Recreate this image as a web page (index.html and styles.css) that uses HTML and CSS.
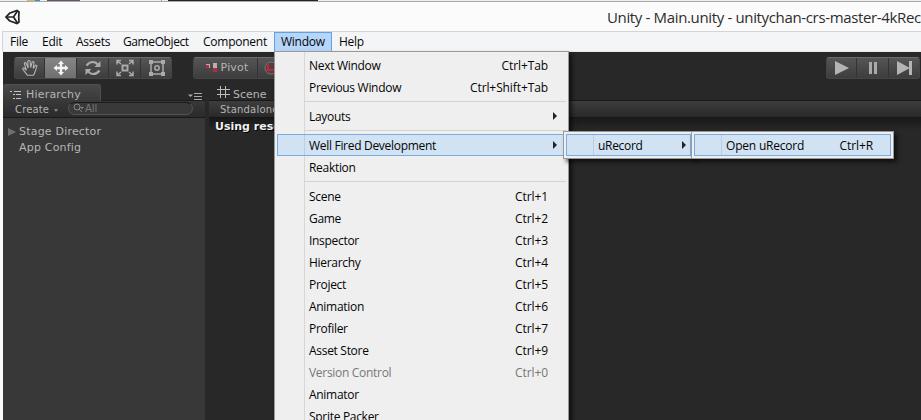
FILE: index.html
```
<!DOCTYPE html>
<html lang="en">
<head>
<meta charset="utf-8">
<title>Unity - Main.unity</title>
<link rel="stylesheet" href="styles.css">
</head>
<body>
<div class="window">
  <div class="behind"><i class="tab-edge"></i><i class="tab-gold"></i><i class="tab-blue"></i><i class="tab-text"></i><i class="tab-end"></i><i class="tab-dark"></i></div>
  <header class="titlebar">
    <svg class="logo" width="16" height="16" viewBox="0 0 16 16" fill="none" stroke="#222" stroke-width="1.7"><path d="M1 8 4.5 4.3 12 1.5 14 3 13.7 8 14 13 12 14.5 4.5 11.7Z"/><path d="M1.5 8H8.5L12.5 2M8.5 8 12.5 14"/></svg>
    <span class="caption">Unity - Main.unity - unitychan-crs-master-4kReco</span>
  </header>
  <nav class="menubar">
    <span class="m-file">File</span><span class="m-edit">Edit</span><span class="m-assets">Assets</span><span class="m-object">GameObject</span><span class="m-component">Component</span><span class="m-window">Window</span><span class="m-help">Help</span>
  </nav>
  <main class="editor">
    <div class="toolbar">
      <div class="group tools">
        <span class="tool"><svg width="18" height="18" viewBox="0 0 20 20" fill="none" stroke="#b5b5b5" stroke-width="1.2"><path d="M7 18 2 11.500Q1.500 9.500 3.500 10L6 12.500 3.700 5Q4.500 3 6 5L8 10 7.500 2.500Q9 .8 10.200 2.500L10.700 9.500 12.500 3.200Q14 2 14.500 4L13.500 10.500 16.200 7Q18 6.500 17.500 8.500L15.500 14.500 14 18Z"/></svg></span>
        <span class="tool on"><svg width="18" height="18" viewBox="0 0 18 18" fill="#f4f4f4"><path d="M9 1.5 12 5H10.2V7.8H13V6L16.5 9 13 12V10.2H10.2V13H12L9 16.5 6 13H7.8V10.2H5V12L1.5 9 5 6V7.8H7.8V5H6Z"/></svg></span>
        <span class="tool"><svg width="18" height="18" viewBox="0 0 18 18" fill="none" stroke="#aaa" stroke-width="2.2"><path d="M2.500 6.500Q5 3 9 3 12 3 14 6M15.500 11.500Q13 15 9 15 6 15 4 12"/><path d="M16.500 2V8H10.500ZM1.500 16V10H7.500Z" fill="#aaa" stroke="none"/></svg></span>
        <span class="tool"><svg width="18" height="18" viewBox="0 0 18 18" fill="none" stroke="#aaa" stroke-width="1.5"><path d="M6.5 6.500h5v5h-5z" stroke-width="2"/><path d="M5 5 1 1.500M1 5.500V1.500H5M13 5 17 1.500M13 1.500h4v4M5 13 1 16.500M1 12.500v4h4M13 13l4 3.500M13 16.500h4v-4"/></svg></span>
        <span class="tool"><svg width="18" height="18" viewBox="0 0 18 18" fill="none" stroke="#aaa" stroke-width="1.5"><path d="M3 3h12v12H3z"/><path d="M1 1h4v4H1zM13 1h4v4h-4zM1 13h4v4H1zM13 13h4v4h-4z" fill="#aaa" stroke="none"/><circle cx="9" cy="9" r="2.2"/></svg></span>
      </div>
      <div class="group pivots">
        <span class="pivot"><svg width="12" height="10" viewBox="0 0 12 10"><path d="M0 1h4v4H0zM7 0h4v9H7z" fill="#b8b0b0"/><path d="M0 2h3v3H0zM7 5h4v4H7z" fill="#b72c3b"/></svg><b class="pivot-text">Pivot</b></span>
        <span class="globe"><svg width="14" height="14" viewBox="0 0 14 14" fill="#593c3f" stroke="#777"><circle cx="7" cy="7" r="6"/><path d="M4 3v6h6" fill="none" stroke="#b72c3b" stroke-width="2"/></svg></span>
      </div>
      <div class="group plays">
        <span><svg width="16" height="14" viewBox="0 0 16 14" fill="#b4b4b4"><path d="M1 0 15 7 1 14Z"/></svg></span>
        <span><svg width="12" height="14" viewBox="0 0 12 14" fill="#aaa"><path d="M2 1h3v12H2zM7 1h3v12H7z"/></svg></span>
        <span><svg width="16" height="14" viewBox="0 0 16 14" fill="#b4b4b4"><path d="M0 0 12 6.500V0H15V14H12V7.500L0 14Z"/></svg></span>
      </div>
    </div>
    <div class="panels">
      <section class="hierarchy">
        <div class="tabs">
          <div class="tab"><svg width="12" height="10" viewBox="0 0 12 10" stroke="#c4c4c4" fill="none"><path d="M0 1.500h2M4 1.500h7M3 4.500h2M6 4.500h5M3 8.500h2M6 8.500h5"/></svg><b class="tab-label">Hierarchy</b></div>
          <svg class="panel-menu" width="15" height="8" viewBox="0 0 15 8"><path d="M0 1.500h5L2.500 4Z" fill="#aaa"/><path d="M6 .5h8M6 3.500h8M6 6.500h8" stroke="#aaa"/></svg>
        </div>
        <div class="bar"><span class="create">Create</span><i class="down"></i><div class="search"><svg width="12" height="11" viewBox="0 0 12 11" fill="none" stroke="#858585"><circle cx="4" cy="4" r="3"/><path d="M6 6l3 3"/><path d="M7 4h4L9 6Z" fill="#858585" stroke="none"/></svg><span class="all">All</span></div></div>
        <div class="tree"><div class="row"><i class="right"></i><span class="stage">Stage Director</span></div><div class="row app"><span class="config">App Config</span></div></div>
      </section>
      <section class="scene">
        <div class="scene-tab"><svg width="13" height="12" viewBox="0 0 13 12" stroke="#bbb"><path d="M3.500 0v12M8.500 0v12M0 3.500h13M0 8.500h13"/></svg><b class="scene-text">Scene</b></div>
        <div class="scene-bar"><b class="standalone">Standalone</b></div>
        <div class="view"><b class="using">Using resolution</b></div>
      </section>
    </div>
  </main>
</div>
<div class="menu main-menu">
  <div class="item"><span class="label">Next Window</span><span class="key">Ctrl+Tab</span></div>
  <div class="item"><span class="label">Previous Window</span><span class="key shift">Ctrl+Shift+Tab</span></div>
  <hr>
  <div class="item"><span class="label">Layouts</span><i class="sub"></i></div>
  <hr>
  <div class="item selected"><span class="label">Well Fired Development</span><i class="sub"></i></div>
  <div class="item"><span class="label">Reaktion</span></div>
  <hr>
  <div class="item"><span class="label">Scene</span><span class="key">Ctrl+1</span></div>
  <div class="item"><span class="label">Game</span><span class="key">Ctrl+2</span></div>
  <div class="item"><span class="label">Inspector</span><span class="key">Ctrl+3</span></div>
  <div class="item"><span class="label">Hierarchy</span><span class="key">Ctrl+4</span></div>
  <div class="item"><span class="label">Project</span><span class="key">Ctrl+5</span></div>
  <div class="item"><span class="label">Animation</span><span class="key">Ctrl+6</span></div>
  <div class="item"><span class="label">Profiler</span><span class="key">Ctrl+7</span></div>
  <div class="item"><span class="label">Asset Store</span><span class="key">Ctrl+9</span></div>
  <div class="item disabled"><span class="label">Version Control</span><span class="key">Ctrl+0</span></div>
  <div class="item"><span class="label">Animator</span></div>
  <div class="item"><span class="label">Sprite Packer</span></div>
</div>
<div class="menu submenu record"><div class="item selected"><span class="label">uRecord</span><i class="sub"></i></div></div>
<div class="menu submenu open"><div class="item selected"><span class="label">Open uRecord</span><span class="key">Ctrl+R</span></div></div>
</body>
</html>
```
FILE: styles.css
```
* { box-sizing: border-box; }
html, body { margin: 0; width: 921px; height: 420px; overflow: hidden; }
body { position: relative; background: #fbfbfb; font: 12px/22px "Open Sans", sans-serif; color: #050505; }
i { font-style: normal; }
b { font-weight: 400; }
span, b { white-space: nowrap; }
svg { flex: none; display: block; }
.window { height: 420px; display: flex; flex-direction: column; }
.behind { height: 2px; flex: none; display: flex; background: #efefef; border-bottom: 1px solid #aaa; }
.tab-edge { width: 27px; }
.tab-gold { width: 8px; background: #dcb850; }
.tab-blue { width: 5px; background: #189cdb; }
.tab-text { width: 33px; margin-left: 7px; background: #66536b; }
.tab-end { width: 82px; margin-right: 6px; border-right: 1px solid #999; }
.tab-dark { width: 150px; background: #222; }
.titlebar { height: 29px; flex: none; display: flex; align-items: center; padding-left: 5px; }
.caption { margin-left: 586px; font-size: 15px; letter-spacing: -.35px; color: #2d2d2d; }
.menubar { height: 21px; flex: none; margin-left: 2px; border: 1px solid #d4d4d4; border-right: 0; border-bottom-color: #e9e9e9; background: #f4f5f7; display: flex; line-height: 20px; }
.menubar span { flex: none; letter-spacing: -.25px; }
.m-file { margin-left: 7px; width: 32px; }
.m-edit { width: 34px; }
.m-assets { width: 47px; }
.menubar .m-object { width: 80px; letter-spacing: -.4px; }
.m-component { width: 71px; }
.m-window { width: 58px; height: 20px; border: 1px solid #62a2e4; background: #b5d6f8; padding-left: 6px; line-height: 18px; }
.m-help { margin-left: 7px; }
.editor { flex: 1; min-height: 0; margin-left: 3px; background: #282828; color: #b5b5b5; font-family: "DejaVu Sans", sans-serif; }
.toolbar { height: 32px; display: flex; align-items: flex-start; padding: 5px 0 0 11px; }
.group { display: flex; height: 22px; flex: none; border: 1px solid #464646; border-top-color: #6b6b6b; border-radius: 3px; overflow: hidden; background: linear-gradient(#555, #3d3d3d); }
.group > span { display: flex; align-items: center; justify-content: center; border-right: 1px solid #333; }
.group > span:last-child { border-right: 0; }
.tools { width: 158px; }
.group > .tool { flex: none; width: 32px; }
.group > .tool:first-child { width: 30px; }
.group > .tool:last-child { width: 31px; }
.tool.on { background: linear-gradient(#868686, #707070); }
.pivots { width: 110px; margin-left: 21px; }
.pivot { width: 64px; gap: 3px; padding-left: 3px; }
.pivot-text { font-size: 11px; letter-spacing: .15px; }
.globe { width: 26px; }
.plays { width: 94px; margin-left: 523px; }
.plays > span { flex: none; width: 32px; }
.plays > span:first-child { width: 30px; }
.panels { display: flex; height: 336px; }
.hierarchy { width: 202px; flex: none; background: #383838; }
.tabs { height: 17px; display: flex; background: #282828; border-bottom: 1px solid #1c1c1c; }
.tab { width: 98px; height: 17px; display: flex; align-items: center; padding: 3px 0 0 7px; gap: 4px; border: 1px solid #4f4f4f; border-width: 1px 1px 0 0; border-radius: 2px 3px 0 0; background: linear-gradient(#484848, #393939); }
.tab-label { font-size: 11px; letter-spacing: .2px; }
.panel-menu { margin: 9px 0 0 87px; }
.bar { height: 17px; background: linear-gradient(#383838, #2b2b2b); border-bottom: 1px solid #191919; display: flex; line-height: 16px; }
.create { width: 39px; margin-left: 12px; font-size: 10px; letter-spacing: .15px; line-height: 18px; }
.down { height: 0; border: 2px solid transparent; border-top: 3px solid #858585; margin-top: 8px; width: 4px; }
.search { width: 125px; height: 13px; margin: 1px 0 0 10px; border: 1px solid #545454; border-top-color: #1b1b1b; border-radius: 8px; display: flex; align-items: center; padding-left: 4px; background: #393939; color: #777; font-size: 10px; }
.tree { padding-top: 6px; font-size: 11px; line-height: 16px; }
.row { display: flex; height: 16px; padding-left: 5px; }
.right { width: 11px; height: 0; border: 4px solid transparent; border-left: 8px solid #707070; border-right: 0; margin: 4px 3px 0 0; width: 8px; }
.app { padding-left: 16px; }
.stage, .config { letter-spacing: .2px; }
.scene { margin-left: 4px; flex: 1; min-width: 0; }
.scene-tab { height: 17px; display: flex; gap: 3px; padding: 2px 0 0 8px; line-height: 17px; font-size: 11px; border-bottom: 1px solid #191919; }
.scene-bar { height: 17px; background: linear-gradient(#3d3d3d, #292929); border-bottom: 1px solid #161616; line-height: 17px; font-size: 10px; padding-left: 11px; letter-spacing: .2px; }
.view { height: 302px; background: linear-gradient(#191919, #282828 12px); padding-left: 6px; line-height: 16px; color: #f0f0f0; }
.using { font-size: 11px; font-weight: 700; text-shadow: 1px 1px #000; }
.menu { position: absolute; background: #efefef; border: 1px solid #999; box-shadow: 3px 3px 4px #0009; font: 12px/22px "Open Sans", sans-serif; color: #050505; }
.main-menu { left: 274px; top: 51px; width: 295px; height: 390px; padding: 2px; background: linear-gradient(90deg, transparent 29px, #d7d7d7 29px, #d7d7d7 30px, transparent 30px), #efefef; }
.item { height: 22px; display: flex; border: 1px solid transparent; line-height: 21px; padding-left: 31px; }
.item .label { flex: 1; letter-spacing: -.3px; }
.open .item .label { letter-spacing: -.2px; }
.key { margin-right: 17px; letter-spacing: -.1px; }
.selected { background: #d1e2f2; border-color: #78ade2; }
.main-menu .selected { background: linear-gradient(90deg, transparent 26px, #b9cfe3 26px, #b9cfe3 27px, transparent 27px), #d1e2f2; }
.disabled { color: #777; }
.sub { height: 0; width: 4px; border: 4px solid transparent; border-left: 4px solid #222; border-right: 0; margin: 6px 8px 0 0; }
.record .sub { margin-right: 4px; }
hr { height: 1px; border: 0; margin: 3px 0 3px 27px; background: #d3d3d3; }
.submenu { padding: 2px; height: 28px; top: 131px; }
.submenu .item { background: linear-gradient(90deg, transparent 26px, #b9cfe3 26px, #b9cfe3 27px, transparent 27px), #d1e2f2; }
.record { left: 563px; width: 131px; }
.open { left: 691px; width: 203px; }
```
